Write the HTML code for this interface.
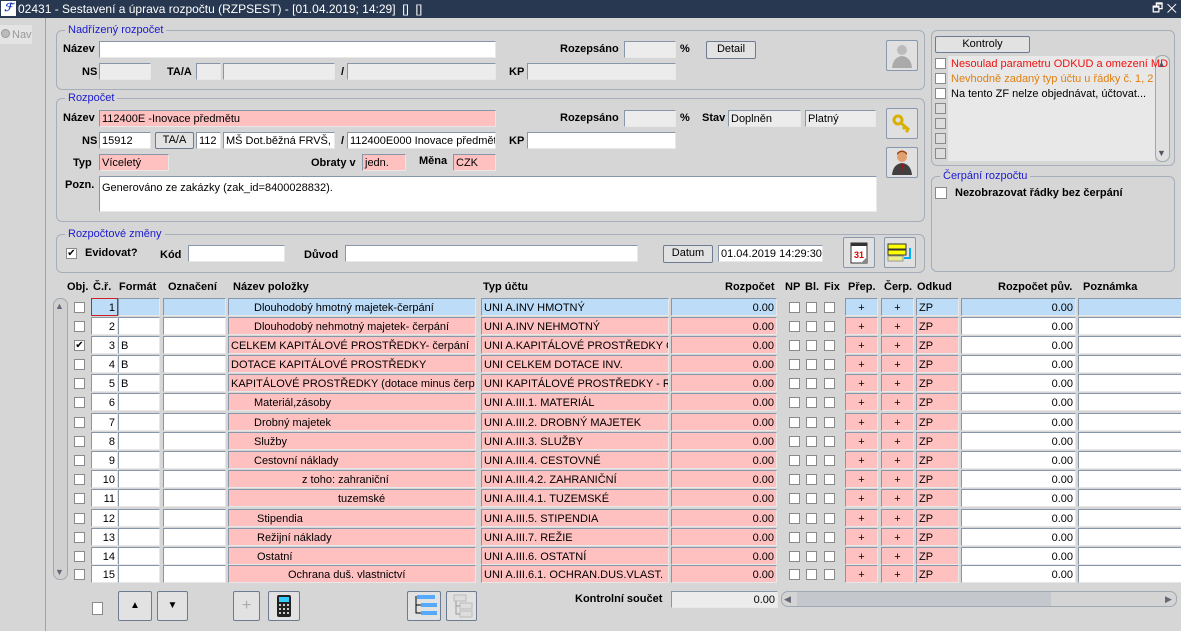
<!DOCTYPE html>
<html><head><meta charset="utf-8"><style>
*{box-sizing:border-box;margin:0;padding:0}
body{width:1181px;height:631px;overflow:hidden;background:#d6d6d6;font-family:"Liberation Sans",sans-serif;font-size:11px;color:#000;position:relative}
.a{position:absolute}
.t{position:absolute;white-space:nowrap;line-height:14px}
.b{font-weight:bold}
.in{position:absolute;height:17px;border:1px solid #8796a8;border-right-color:#e8e8e8;border-bottom-color:#e8e8e8;background:#fff;padding:1px 2px;white-space:nowrap;overflow:hidden;line-height:14px}
.g{background:#ececec}.p{background:#ffc0c0}.bl{background:#bcdcf8}
.grp{position:absolute;border:1px solid #a6aebb;border-radius:6px}
.lg{position:absolute;background:#d6d6d6;color:#1a1ad0;padding:0 3px;line-height:12px;top:-7px;left:8px}
.btn{position:absolute;border:1px solid #6d7c90;border-radius:2px;background:#e2e2e2;text-align:center;line-height:15px}
.ib{position:absolute;width:32px;height:31px;border:1px solid #8898ad;border-radius:2px;background:#e0e0e0}
.cb{position:absolute;width:11px;height:11px;border:1px solid #8a8a8a;background:#fff}
.r{position:absolute;left:0;width:1181px;height:18px}
.r .in{top:0;height:18px;padding-top:2px}
.r .cb{top:4px}
.n{left:91px;width:27px;text-align:right}
.f{left:118px;width:42px}
.o{left:163px;width:63px}
.nm{left:228px;width:248px}
.ty{left:481px;width:188px}
.rz{left:671px;width:106px;text-align:right}
.pr{left:845px;width:33px;text-align:center}
.ce{left:881px;width:33px;text-align:center}
.od{left:916px;width:43px}
.pv{left:961px;width:115px;text-align:right}
.pz{left:1078px;width:110px}
.k1{left:74px}.k2{left:789px}.k3{left:806px}.k4{left:824px}
.hd{position:absolute;top:281px;font-weight:bold;font-size:11px}
</style></head><body>
<div class="a" style="left:0;top:0;width:1181px;height:18px;background:#283850"></div>
<div class="a" style="left:1px;top:1px;width:15px;height:15px;background:#fff;color:#1030c0;font-weight:bold;font-style:italic;font-size:11px;line-height:15px;text-align:center">ℱ</div>
<div class="t" style="left:18px;top:2px;color:#fff;font-size:12px">02431 - Sestavení a úprava rozpočtu (RZPSEST) - [01.04.2019; 14:29] &nbsp;[] &nbsp;[]</div>
<div class="t" style="left:1152px;top:1px;color:#fff;font-size:12px">🗗 ✕</div>
<div class="a" style="left:45px;top:18px;width:1px;height:613px;background:#9aa4b0"></div>
<div class="a" style="left:0;top:25px;width:32px;height:19px;background:#e4e4e4"></div>
<div class="a" style="left:1px;top:29px;width:9px;height:9px;border-radius:50%;background:#bbb;border:1px solid #999"></div>
<div class="t" style="left:12px;top:28px;color:#999">Nav</div>

<div class="grp" style="left:56px;top:30px;width:869px;height:60px"><div class="lg">Nadřízený rozpočet</div></div>
<div class="t b" style="left:63px;top:42px">Název</div>
<div class="in" style="left:99px;top:41px;width:397px"></div>
<div class="t b" style="left:82px;top:65px">NS</div>
<div class="in g" style="left:99px;top:63px;width:52px"></div>
<div class="t b" style="left:167px;top:65px">TA/A</div>
<div class="in g" style="left:196px;top:63px;width:25px"></div>
<div class="in g" style="left:223px;top:63px;width:112px"></div>
<div class="t b" style="left:341px;top:65px">/</div>
<div class="in g" style="left:347px;top:63px;width:149px"></div>
<div class="t b" style="left:560px;top:42px">Rozepsáno</div>
<div class="in g" style="left:624px;top:41px;width:52px"></div>
<div class="t b" style="left:680px;top:42px">%</div>
<div class="btn" style="left:706px;top:41px;width:50px;height:18px">Detail</div>
<div class="t b" style="left:509px;top:65px">KP</div>
<div class="in g" style="left:527px;top:63px;width:149px"></div>
<div class="ib" style="left:886px;top:40px"><svg width="30" height="29" viewBox="0 0 30 29"><circle cx="15" cy="9" r="5" fill="#bbb"/><path d="M5 27 Q6 16 15 15 Q24 16 25 27Z" fill="#aaa"/></svg></div>

<div class="grp" style="left:56px;top:98px;width:869px;height:124px"><div class="lg">Rozpočet</div></div>
<div class="t b" style="left:63px;top:111px">Název</div>
<div class="in p" style="left:99px;top:110px;width:397px">112400E -Inovace předmětu</div>
<div class="t b" style="left:82px;top:134px">NS</div>
<div class="in" style="left:99px;top:132px;width:52px">15912</div>
<div class="btn" style="left:155px;top:132px;width:39px;height:17px">TA/A</div>
<div class="in" style="left:196px;top:132px;width:25px">112</div>
<div class="in" style="left:223px;top:132px;width:112px">MŠ Dot.běžná FRVŠ, u</div>
<div class="t b" style="left:341px;top:134px">/</div>
<div class="in" style="left:347px;top:132px;width:149px">112400E000 Inovace předmětu</div>
<div class="t b" style="left:73px;top:156px">Typ</div>
<div class="in p" style="left:99px;top:154px;width:70px">Víceletý</div>
<div class="t b" style="left:311px;top:156px">Obraty v</div>
<div class="in p" style="left:362px;top:154px;width:44px">jedn.</div>
<div class="t b" style="left:419px;top:154px">Měna</div>
<div class="in p" style="left:453px;top:154px;width:43px">CZK</div>
<div class="t b" style="left:65px;top:178px">Pozn.</div>
<div class="in" style="left:99px;top:176px;width:778px;height:36px;padding-top:4px">Generováno ze zakázky (zak_id=8400028832).</div>
<div class="t b" style="left:560px;top:111px">Rozepsáno</div>
<div class="in g" style="left:624px;top:110px;width:52px"></div>
<div class="t b" style="left:680px;top:111px">%</div>
<div class="t b" style="left:702px;top:111px">Stav</div>
<div class="in g" style="left:728px;top:110px;width:73px">Doplněn</div>
<div class="in g" style="left:805px;top:110px;width:71px">Platný</div>
<div class="t b" style="left:509px;top:134px">KP</div>
<div class="in" style="left:527px;top:132px;width:149px"></div>
<div class="ib" style="left:886px;top:108px"><svg width="30" height="29" viewBox="0 0 30 29"><circle cx="11" cy="11" r="4" fill="none" stroke="#d8b000" stroke-width="3"/><path d="M14 14 L22 21 M18 18 L16 20 M21 21 L19 23" stroke="#d8b000" stroke-width="3"/></svg></div>
<div class="ib" style="left:886px;top:147px"><svg width="30" height="29" viewBox="0 0 30 29"><circle cx="15" cy="9" r="5" fill="#e0a070"/><path d="M10 7 Q15 1 20 7 L20 5 Q15 0 10 5Z" fill="#a04010"/><path d="M5 27 Q6 16 15 15 Q24 16 25 27Z" fill="#404040"/><path d="M14 16 L16 16 L15 25Z" fill="#c00"/></svg></div>

<div class="grp" style="left:56px;top:234px;width:869px;height:39px"><div class="lg">Rozpočtové změny</div></div>
<div class="cb" style="left:66px;top:248px;font-size:10px;line-height:9px;text-align:center">✔</div>
<div class="t b" style="left:85px;top:246px">Evidovat?</div>
<div class="t b" style="left:160px;top:248px">Kód</div>
<div class="in" style="left:188px;top:245px;width:97px"></div>
<div class="t b" style="left:304px;top:248px">Důvod</div>
<div class="in" style="left:345px;top:245px;width:293px"></div>
<div class="btn" style="left:663px;top:245px;width:50px;height:18px">Datum</div>
<div class="in" style="left:718px;top:245px;width:105px">01.04.2019 14:29:30</div>
<div class="ib" style="left:843px;top:237px"><svg width="30" height="29" viewBox="0 0 30 29"><rect x="7" y="5" width="16" height="20" fill="#fff" stroke="#333"/><path d="M7 5h16v3H7z" fill="#333"/><text x="10" y="20" font-size="9" fill="#d00" font-weight="bold" font-family="Liberation Sans">31</text><path d="M17 25 L23 19 L23 25Z" fill="#888"/></svg></div>
<div class="ib" style="left:884px;top:237px"><svg width="30" height="29" viewBox="0 0 30 29"><rect x="3" y="6" width="18" height="5" fill="#ff0" stroke="#333"/><rect x="3" y="12" width="18" height="5" fill="#ff0" stroke="#333"/><rect x="3" y="18" width="15" height="5" fill="#ee8" stroke="#999"/><path d="M25 10 V20 H19" stroke="#0ae" stroke-width="2" fill="none"/></svg></div>

<div class="grp" style="left:931px;top:30px;width:244px;height:136px"></div>
<div class="btn" style="left:935px;top:36px;width:95px;height:17px">Kontroly</div>
<div class="a" style="left:948px;top:56px;width:207px;height:105px;background:#e8e8e8"></div>
<div class="a" style="left:1155px;top:55px;width:15px;height:107px;background:#e0e0e0;border:1px solid #9aa;border-radius:7px"></div>
<div class="t" style="left:1157px;top:57px;font-size:9px;color:#556">▲</div>
<div class="t" style="left:1157px;top:146px;font-size:9px;color:#556">▼</div>
<div class="cb" style="left:935px;top:58px"></div><div class="t" style="left:951px;top:57px;color:#f01010">Nesoulad parametru ODKUD a omezení MD</div>
<div class="cb" style="left:935px;top:73px"></div><div class="t" style="left:951px;top:72px;color:#e08010">Nevhodně zadaný typ účtu u řádky č. 1, 2</div>
<div class="cb" style="left:935px;top:88px"></div><div class="t" style="left:951px;top:87px">Na tento ZF nelze objednávat, účtovat...</div>
<div class="cb" style="left:935px;top:103px;background:#ddd"></div>
<div class="cb" style="left:935px;top:118px;background:#ddd"></div>
<div class="cb" style="left:935px;top:133px;background:#ddd"></div>
<div class="cb" style="left:935px;top:148px;background:#ddd"></div>
<div class="grp" style="left:931px;top:176px;width:244px;height:96px"><div class="lg">Čerpání rozpočtu</div></div>
<div class="cb" style="left:935px;top:187px;width:12px;height:12px"></div>
<div class="t b" style="left:955px;top:186px">Nezobrazovat řádky bez čerpání</div>

<div class="hd" style="left:67px">Obj.</div>
<div class="hd" style="left:93px">Č.ř.</div>
<div class="hd" style="left:119px">Formát</div>
<div class="hd" style="left:168px">Označení</div>
<div class="hd" style="left:233px">Název položky</div>
<div class="hd" style="left:483px">Typ účtu</div>
<div class="hd" style="left:725px">Rozpočet</div>
<div class="hd" style="left:785px">NP</div>
<div class="hd" style="left:805px">Bl.</div>
<div class="hd" style="left:824px">Fix</div>
<div class="hd" style="left:848px">Přep.</div>
<div class="hd" style="left:884px">Čerp.</div>
<div class="hd" style="left:917px">Odkud</div>
<div class="hd" style="left:998px">Rozpočet pův.</div>
<div class="hd" style="left:1083px">Poznámka</div>

<div class="a" style="left:53px;top:298px;width:15px;height:282px;border:1px solid #a0a8b4;border-radius:7px;background:#d0d0d0"></div>
<div class="t" style="left:55px;top:299px;font-size:9px;color:#667">▲</div>
<div class="t" style="left:55px;top:565px;font-size:9px;color:#667">▼</div>

<div class="r" style="top:298px"><div class="cb k1"></div><div class="in n bl" style="border:1px solid #d02020">1</div><div class="in f bl"></div><div class="in o bl"></div><div class="in nm bl" style="padding-left:25px">Dlouhodobý hmotný majetek-čerpání</div><div class="in ty bl">UNI A.INV HMOTNÝ</div><div class="in rz bl">0.00</div><div class="cb k2"></div><div class="cb k3"></div><div class="cb k4"></div><div class="in pr bl">+</div><div class="in ce bl">+</div><div class="in od bl">ZP</div><div class="in pv bl">0.00</div><div class="in pz bl"></div></div>
<div class="r" style="top:317px"><div class="cb k1"></div><div class="in n">2</div><div class="in f"></div><div class="in o"></div><div class="in nm p" style="padding-left:25px">Dlouhodobý nehmotný majetek- čerpání</div><div class="in ty p">UNI A.INV NEHMOTNÝ</div><div class="in rz p">0.00</div><div class="cb k2"></div><div class="cb k3"></div><div class="cb k4"></div><div class="in pr p">+</div><div class="in ce p">+</div><div class="in od p">ZP</div><div class="in pv">0.00</div><div class="in pz"></div></div>
<div class="r" style="top:336px"><div class="cb k1" style="font-size:10px;line-height:9px;text-align:center">✔</div><div class="in n">3</div><div class="in f">B</div><div class="in o"></div><div class="in nm p">CELKEM KAPITÁLOVÉ PROSTŘEDKY- čerpání</div><div class="in ty p">UNI A.KAPITÁLOVÉ PROSTŘEDKY ČE</div><div class="in rz p">0.00</div><div class="cb k2"></div><div class="cb k3"></div><div class="cb k4"></div><div class="in pr p">+</div><div class="in ce p">+</div><div class="in od p">ZP</div><div class="in pv">0.00</div><div class="in pz"></div></div>
<div class="r" style="top:355px"><div class="cb k1"></div><div class="in n">4</div><div class="in f">B</div><div class="in o"></div><div class="in nm p">DOTACE KAPITÁLOVÉ PROSTŘEDKY</div><div class="in ty p">UNI CELKEM DOTACE INV.</div><div class="in rz p">0.00</div><div class="cb k2"></div><div class="cb k3"></div><div class="cb k4"></div><div class="in pr p">+</div><div class="in ce p">+</div><div class="in od p">ZP</div><div class="in pv">0.00</div><div class="in pz"></div></div>
<div class="r" style="top:374px"><div class="cb k1"></div><div class="in n">5</div><div class="in f">B</div><div class="in o"></div><div class="in nm p">KAPITÁLOVÉ PROSTŘEDKY (dotace minus čerpán</div><div class="in ty p">UNI KAPITÁLOVÉ PROSTŘEDKY - ROZ</div><div class="in rz p">0.00</div><div class="cb k2"></div><div class="cb k3"></div><div class="cb k4"></div><div class="in pr p">+</div><div class="in ce p">+</div><div class="in od p">ZP</div><div class="in pv">0.00</div><div class="in pz"></div></div>
<div class="r" style="top:393px"><div class="cb k1"></div><div class="in n">6</div><div class="in f"></div><div class="in o"></div><div class="in nm p" style="padding-left:25px">Materiál,zásoby</div><div class="in ty p">UNI A.III.1. MATERIÁL</div><div class="in rz p">0.00</div><div class="cb k2"></div><div class="cb k3"></div><div class="cb k4"></div><div class="in pr p">+</div><div class="in ce p">+</div><div class="in od p">ZP</div><div class="in pv">0.00</div><div class="in pz"></div></div>
<div class="r" style="top:413px"><div class="cb k1"></div><div class="in n">7</div><div class="in f"></div><div class="in o"></div><div class="in nm p" style="padding-left:25px">Drobný majetek</div><div class="in ty p">UNI A.III.2. DROBNÝ MAJETEK</div><div class="in rz p">0.00</div><div class="cb k2"></div><div class="cb k3"></div><div class="cb k4"></div><div class="in pr p">+</div><div class="in ce p">+</div><div class="in od p">ZP</div><div class="in pv">0.00</div><div class="in pz"></div></div>
<div class="r" style="top:432px"><div class="cb k1"></div><div class="in n">8</div><div class="in f"></div><div class="in o"></div><div class="in nm p" style="padding-left:25px">Služby</div><div class="in ty p">UNI A.III.3. SLUŽBY</div><div class="in rz p">0.00</div><div class="cb k2"></div><div class="cb k3"></div><div class="cb k4"></div><div class="in pr p">+</div><div class="in ce p">+</div><div class="in od p">ZP</div><div class="in pv">0.00</div><div class="in pz"></div></div>
<div class="r" style="top:451px"><div class="cb k1"></div><div class="in n">9</div><div class="in f"></div><div class="in o"></div><div class="in nm p" style="padding-left:25px">Cestovní náklady</div><div class="in ty p">UNI A.III.4. CESTOVNÉ</div><div class="in rz p">0.00</div><div class="cb k2"></div><div class="cb k3"></div><div class="cb k4"></div><div class="in pr p">+</div><div class="in ce p">+</div><div class="in od p">ZP</div><div class="in pv">0.00</div><div class="in pz"></div></div>
<div class="r" style="top:470px"><div class="cb k1"></div><div class="in n">10</div><div class="in f"></div><div class="in o"></div><div class="in nm p" style="padding-left:73px">z toho: zahraniční</div><div class="in ty p">UNI A.III.4.2. ZAHRANIČNÍ</div><div class="in rz p">0.00</div><div class="cb k2"></div><div class="cb k3"></div><div class="cb k4"></div><div class="in pr p">+</div><div class="in ce p">+</div><div class="in od p">ZP</div><div class="in pv">0.00</div><div class="in pz"></div></div>
<div class="r" style="top:489px"><div class="cb k1"></div><div class="in n">11</div><div class="in f"></div><div class="in o"></div><div class="in nm p" style="padding-left:109px">tuzemské</div><div class="in ty p">UNI A.III.4.1. TUZEMSKÉ</div><div class="in rz p">0.00</div><div class="cb k2"></div><div class="cb k3"></div><div class="cb k4"></div><div class="in pr p">+</div><div class="in ce p">+</div><div class="in od p">ZP</div><div class="in pv">0.00</div><div class="in pz"></div></div>
<div class="r" style="top:509px"><div class="cb k1"></div><div class="in n">12</div><div class="in f"></div><div class="in o"></div><div class="in nm p" style="padding-left:28px">Stipendia</div><div class="in ty p">UNI A.III.5. STIPENDIA</div><div class="in rz p">0.00</div><div class="cb k2"></div><div class="cb k3"></div><div class="cb k4"></div><div class="in pr p">+</div><div class="in ce p">+</div><div class="in od p">ZP</div><div class="in pv">0.00</div><div class="in pz"></div></div>
<div class="r" style="top:528px"><div class="cb k1"></div><div class="in n">13</div><div class="in f"></div><div class="in o"></div><div class="in nm p" style="padding-left:28px">Režijní náklady</div><div class="in ty p">UNI A.III.7. REŽIE</div><div class="in rz p">0.00</div><div class="cb k2"></div><div class="cb k3"></div><div class="cb k4"></div><div class="in pr p">+</div><div class="in ce p">+</div><div class="in od p">ZP</div><div class="in pv">0.00</div><div class="in pz"></div></div>
<div class="r" style="top:547px"><div class="cb k1"></div><div class="in n">14</div><div class="in f"></div><div class="in o"></div><div class="in nm p" style="padding-left:28px">Ostatní</div><div class="in ty p">UNI A.III.6. OSTATNÍ</div><div class="in rz p">0.00</div><div class="cb k2"></div><div class="cb k3"></div><div class="cb k4"></div><div class="in pr p">+</div><div class="in ce p">+</div><div class="in od p">ZP</div><div class="in pv">0.00</div><div class="in pz"></div></div>
<div class="r" style="top:565px"><div class="cb k1"></div><div class="in n">15</div><div class="in f"></div><div class="in o"></div><div class="in nm p" style="padding-left:59px">Ochrana duš. vlastnictví</div><div class="in ty p">UNI A.III.6.1. OCHRAN.DUS.VLAST.</div><div class="in rz p">0.00</div><div class="cb k2"></div><div class="cb k3"></div><div class="cb k4"></div><div class="in pr p">+</div><div class="in ce p">+</div><div class="in od p">ZP</div><div class="in pv">0.00</div><div class="in pz"></div></div>

<div class="cb" style="left:92px;top:602px;width:11px;height:13px"></div>
<div class="btn" style="left:118px;top:591px;width:34px;height:30px;line-height:28px;font-size:10px">▲</div>
<div class="btn" style="left:157px;top:591px;width:31px;height:30px;line-height:28px;font-size:10px">▼</div>
<div class="btn" style="left:233px;top:591px;width:27px;height:30px;line-height:28px;font-size:16px;color:#aaa">+</div>
<div class="btn" style="left:268px;top:591px;width:32px;height:30px"><svg width="30" height="28" viewBox="0 0 30 28"><rect x="8" y="3" width="14" height="22" rx="2" fill="#222"/><rect x="10" y="5" width="10" height="5" fill="#3cf"/><g fill="#ccc"><rect x="10" y="12" width="2" height="2"/><rect x="14" y="12" width="2" height="2"/><rect x="18" y="12" width="2" height="2"/><rect x="10" y="16" width="2" height="2"/><rect x="14" y="16" width="2" height="2"/><rect x="18" y="16" width="2" height="2"/><rect x="10" y="20" width="2" height="2"/><rect x="14" y="20" width="2" height="2"/><rect x="18" y="20" width="2" height="2"/></g></svg></div>
<div class="btn" style="left:407px;top:591px;width:34px;height:30px"><svg width="32" height="28" viewBox="0 0 32 28"><rect x="9" y="3" width="18" height="4" fill="#5af"/><rect x="13" y="11" width="16" height="4" fill="#5af"/><rect x="13" y="19" width="16" height="4" fill="#5af"/><path d="M8 4 V21 H13 M8 13 H13" stroke="#000" fill="none"/></svg></div>
<div class="btn" style="left:446px;top:591px;width:31px;height:30px"><svg width="30" height="28" viewBox="0 0 30 28"><rect x="7" y="3" width="12" height="6" fill="#ddd" stroke="#bbb"/><rect x="13" y="11" width="12" height="6" fill="#ddd" stroke="#bbb"/><rect x="13" y="19" width="12" height="6" fill="#ddd" stroke="#bbb"/><path d="M9 9 V22 H13 M9 14 H13" stroke="#999" fill="none"/></svg></div>
<div class="t b" style="left:575px;top:592px">Kontrolní součet</div>
<div class="in g" style="left:671px;top:591px;width:107px;text-align:right">0.00</div>
<div class="a" style="left:781px;top:591px;width:396px;height:16px;border:1px solid #a0a8b4;border-radius:7px;background:#d4d4d4"></div>
<div class="a" style="left:797px;top:592px;width:254px;height:14px;background:#c4c8cc"></div>
<div class="t" style="left:784px;top:592px;font-size:9px;color:#667">◀</div>
<div class="t" style="left:1165px;top:592px;font-size:9px;color:#667">▶</div>
</body></html>
